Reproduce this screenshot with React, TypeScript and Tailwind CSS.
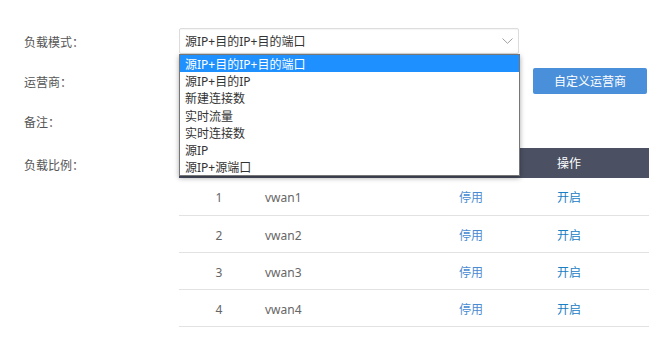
import { useState } from "react";

const MODES = [
  "源IP+目的IP+目的端口",
  "源IP+目的IP",
  "新建连接数",
  "实时流量",
  "实时连接数",
  "源IP",
  "源IP+源端口",
];

const LINKS = [
  { id: 1, name: "vwan1" },
  { id: 2, name: "vwan2" },
  { id: 3, name: "vwan3" },
  { id: 4, name: "vwan4" },
];

function Chevron() {
  return (
    <svg width="11" height="6" viewBox="0 0 11 6" fill="none" className="text-[#a0a0a0]">
      <path d="M0.5 0.5 L5.5 5.3 L10.5 0.5" stroke="currentColor" strokeWidth="1" />
    </svg>
  );
}

export default function App() {
  const [mode, setMode] = useState(MODES[0]);
  const [open, setOpen] = useState(true);

  return (
    <div className="min-h-screen bg-white pl-[24px] pt-[28px] text-[12px] font-['Noto_Sans','Noto_Sans_CJK_SC',sans-serif] text-[#555]">
      {/* 负载模式 */}
      <div className="mb-[14px] flex h-[26px] items-center">
        <div className="w-[155px] pt-[3px]">负载模式：</div>
        <div className="relative z-10 w-[340px]">
          <button
            type="button"
            onClick={() => setOpen(!open)}
            className="flex h-[26px] w-full items-center justify-between rounded-[2px] border border-[#dcdcdc] bg-white pl-[5px] pr-[5px] text-left text-[#333] shadow-[inset_0_1px_1px_rgba(0,0,0,0.04)]"
          >
            <span className="pt-[2px]">{mode}</span>
            <Chevron />
          </button>
          {open && (
            <ul className="absolute left-0 top-[26px] w-[341px] border border-[#767676] bg-white text-[#333] shadow-[0_2px_5px_rgba(0,0,0,0.35)]">
              {MODES.map((item) => (
                <li
                  key={item}
                  onClick={() => {
                    setMode(item);
                    setOpen(false);
                  }}
                  className={`h-[17.2px] pl-[5px] pt-[1px] leading-[17px] ${
                    item === mode ? "bg-[#1e90ff] text-white" : ""
                  }`}
                >
                  {item}
                </li>
              ))}
            </ul>
          )}
        </div>
      </div>

      {/* 运营商 */}
      <div className="mb-[14px] flex h-[26px] items-center">
        <div className="w-[155px] pt-[3px]">运营商：</div>
        <div className="h-[26px] w-[340px] rounded-[2px] border border-[#dcdcdc]" />
        <button
          type="button"
          className="ml-[14px] h-[26px] w-[114px] rounded-[2px] bg-[#4a8fd9] pt-[2px] text-white"
        >
          自定义运营商
        </button>
      </div>

      {/* 备注 */}
      <div className="mb-[14px] flex h-[26px] items-center">
        <div className="w-[155px] pt-[3px]">备注：</div>
        <div className="h-[26px] w-[340px] rounded-[2px] border border-[#dcdcdc]" />
      </div>

      {/* 负载比例 */}
      <div className="flex items-start">
        <div className="w-[155px] pt-[3px] leading-[30px]">负载比例：</div>
        <div className="w-[470px]">
          <div className="grid h-[30px] grid-cols-[80px_194px_36px_160px] items-center bg-[#4b5163] pt-[2px] text-white">
            <div />
            <div />
            <div />
            <div className="text-center">操作</div>
          </div>
          {LINKS.map((link, i) => (
            <div
              key={link.id}
              className={`grid grid-cols-[80px_194px_36px_160px] items-center border-b border-[#e2e2e2] pt-[3px] text-[#666] ${
                i === 0 ? "h-[38px]" : "h-[37px]"
              }`}
            >
              <div className="text-center">{link.id}</div>
              <div className="pl-[6px]">{link.name}</div>
              <div className="whitespace-nowrap text-center text-[#4a8bd2]">停用</div>
              <div className="text-center text-[#1a80c4]">开启</div>
            </div>
          ))}
        </div>
      </div>
    </div>
  );
}
